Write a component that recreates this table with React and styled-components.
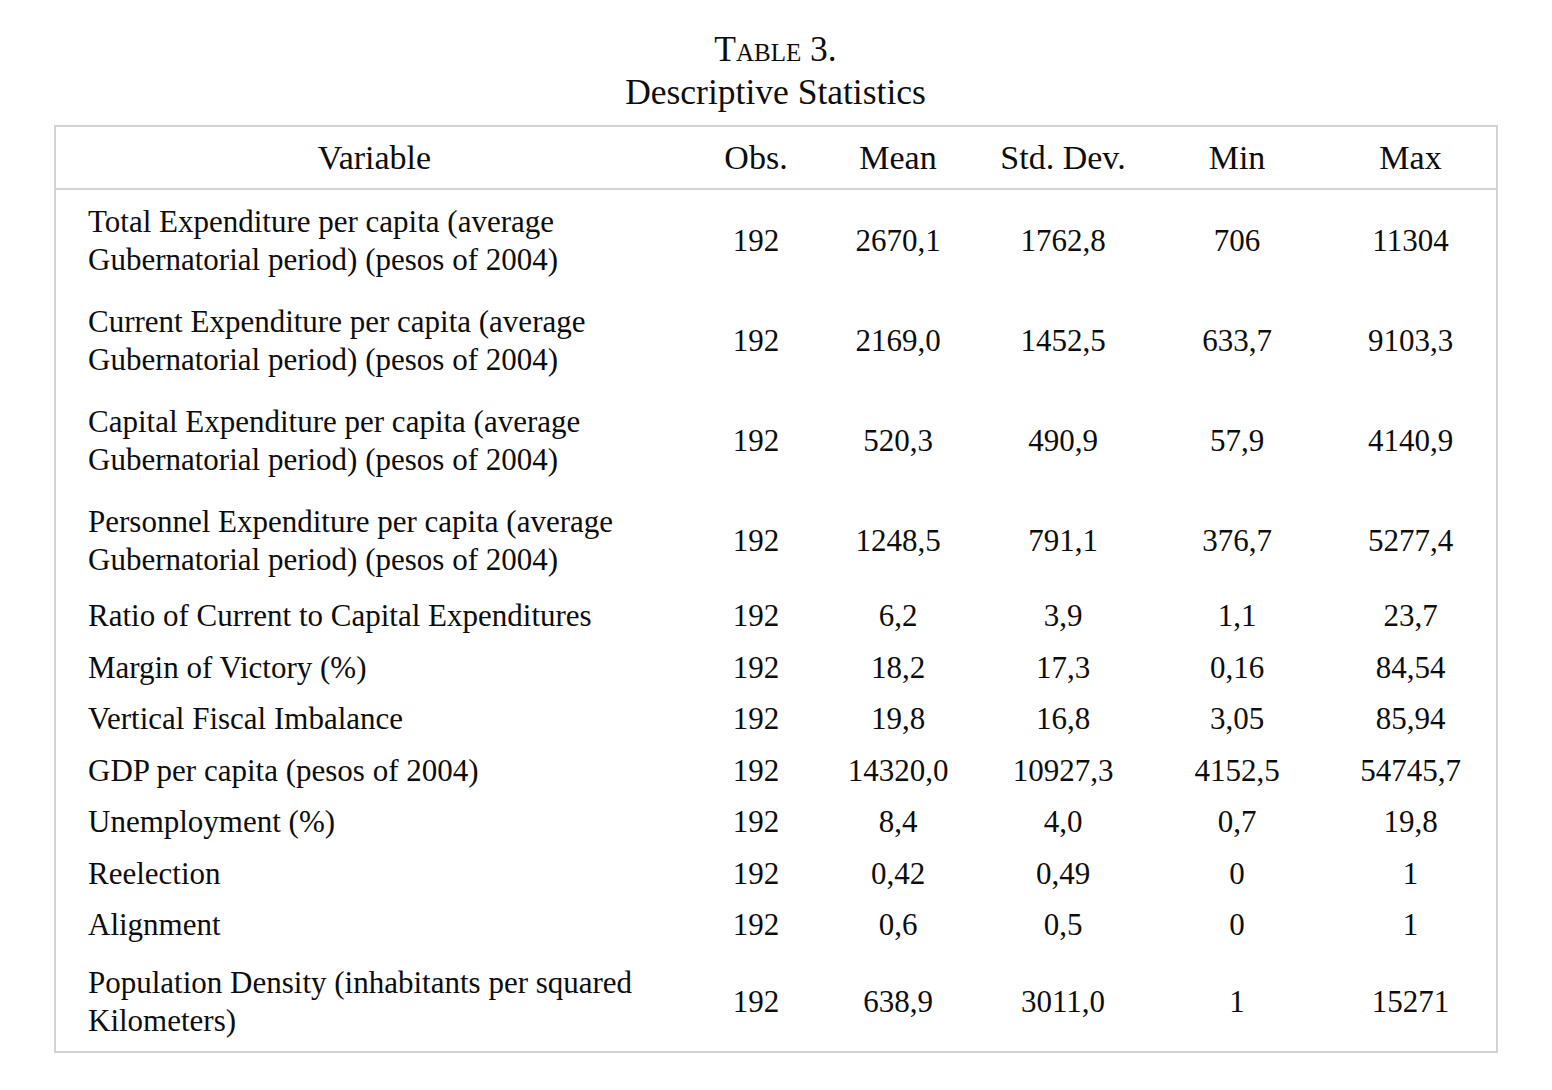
import styled, { createGlobalStyle } from 'styled-components'

const GlobalStyle = createGlobalStyle`
  html, body {
    margin: 0;
    padding: 0;
    background: #fff;
  }
  body {
    font-family: "Liberation Serif", "DejaVu Serif", serif;
    color: #0d0d0d;
  }
`

const Page = styled.div`
  padding: 28px 55px 0 54px;
  width: 1443px;
`

const Caption = styled.div`
  text-align: center;
  font-size: 35.5px;
  line-height: 43px;
  margin-bottom: 11px;
`

const CaptionLabel = styled.div`
  font-variant: small-caps;
`

const Table = styled.table`
  width: 1440px;
  border-collapse: collapse;
  border: 2px solid #d2d2d2;
  table-layout: fixed;
  font-size: 31px;
  line-height: 38px;
`

const HeadCell = styled.th`
  font-weight: normal;
  font-size: 34px;
  text-align: center;
  height: 61px;
  padding: 0;
  border-bottom: 2px solid #d2d2d2;
  width: ${p => p.$w}px;
`

const Cell = styled.td`
  text-align: ${p => (p.$left ? 'left' : 'center')};
  vertical-align: middle;
  padding-top: ${p => (p.$tall ? '13px' : '7px')};
  padding-bottom: ${p => (p.$tall ? '11px' : '6.5px')};
  padding-left: ${p => (p.$left ? '32px' : '0')};
  padding-right: ${p => (p.$left ? '20px' : '0')};
`

const columns = [
  { label: 'Variable', w: 637 },
  { label: 'Obs.', w: 126 },
  { label: 'Mean', w: 158 },
  { label: 'Std. Dev.', w: 172 },
  { label: 'Min', w: 176 },
  { label: 'Max', w: 171 },
]

const rows = [
  { name: ['Total Expenditure per capita (average', 'Gubernatorial period) (pesos of 2004)'], v: ['192', '2670,1', '1762,8', '706', '11304'] },
  { name: ['Current Expenditure per capita (average', 'Gubernatorial period) (pesos of 2004)'], v: ['192', '2169,0', '1452,5', '633,7', '9103,3'] },
  { name: ['Capital Expenditure per capita (average', 'Gubernatorial period) (pesos of 2004)'], v: ['192', '520,3', '490,9', '57,9', '4140,9'] },
  { name: ['Personnel Expenditure per capita (average', 'Gubernatorial period) (pesos of 2004)'], v: ['192', '1248,5', '791,1', '376,7', '5277,4'] },
  { name: ['Ratio of Current to Capital Expenditures'], v: ['192', '6,2', '3,9', '1,1', '23,7'] },
  { name: ['Margin of Victory (%)'], v: ['192', '18,2', '17,3', '0,16', '84,54'] },
  { name: ['Vertical Fiscal Imbalance'], v: ['192', '19,8', '16,8', '3,05', '85,94'] },
  { name: ['GDP per capita (pesos of 2004)'], v: ['192', '14320,0', '10927,3', '4152,5', '54745,7'] },
  { name: ['Unemployment (%)'], v: ['192', '8,4', '4,0', '0,7', '19,8'] },
  { name: ['Reelection'], v: ['192', '0,42', '0,49', '0', '1'] },
  { name: ['Alignment'], v: ['192', '0,6', '0,5', '0', '1'] },
  { name: ['Population Density (inhabitants per squared', 'Kilometers)'], v: ['192', '638,9', '3011,0', '1', '15271'] },
]

export default function App() {
  return (
    <>
      <GlobalStyle />
      <Page>
        <Caption>
          <CaptionLabel>Table 3.</CaptionLabel>
          <div>Descriptive Statistics</div>
        </Caption>
        <Table>
          <thead>
            <tr>
              {columns.map(c => (
                <HeadCell key={c.label} $w={c.w}>{c.label}</HeadCell>
              ))}
            </tr>
          </thead>
          <tbody>
            {rows.map((r, i) => {
              const tall = r.name.length > 1
              return (
                <tr key={i}>
                  <Cell $left $tall={tall}>
                    {r.name.map((line, j) => (
                      <div key={j}>{line}</div>
                    ))}
                  </Cell>
                  {r.v.map((val, j) => (
                    <Cell key={j} $tall={tall}>{val}</Cell>
                  ))}
                </tr>
              )
            })}
          </tbody>
        </Table>
      </Page>
    </>
  )
}
